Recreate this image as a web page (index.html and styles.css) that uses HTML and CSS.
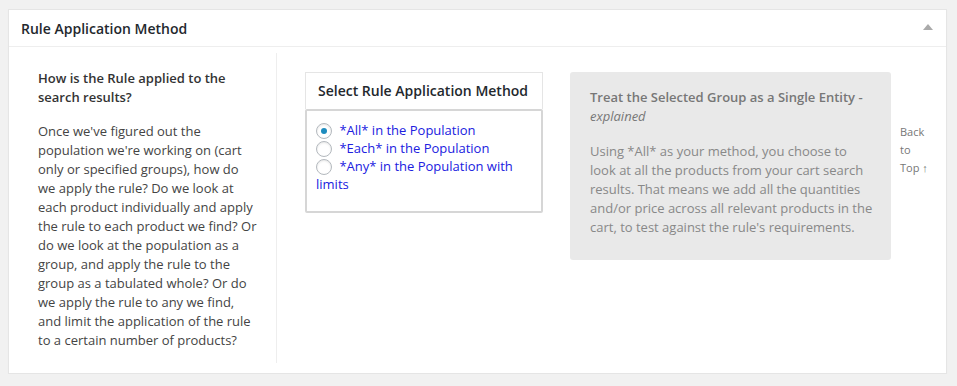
FILE: index.html
```html
<!DOCTYPE html>
<html lang="en">
<head>
    <meta charset="UTF-8">
    <title>Rule Application Method</title>
    <link rel="stylesheet" href="styles.css">
</head>
<body>
    <div class="postbox">
        <div class="hndle">
            <span>Rule Application Method</span>
            <span class="toggle-arrow"></span>
        </div>
        <div class="inside">
            <div class="help-col">
                <p class="help-title">How is the Rule applied to the search results?</p>
                <p>Once we've figured out the population we're working on (cart only or specified groups), how do we apply the rule? Do we look at each product individually and apply the rule to each product we find? Or do we look at the population as a group, and apply the rule to the group as a tabulated whole? Or do we apply the rule to any we find, and limit the application of the rule to a certain number of products?</p>
            </div>
            <div class="select-box">
                <div class="select-head">Select Rule Application Method</div>
                <div class="select-body">
                    <label class="choice"><input type="radio" name="method" checked> *All* in the Population</label><br>
                    <label class="choice"><input type="radio" name="method"> *Each* in the Population</label><br>
                    <label class="choice"><input type="radio" name="method"> *Any* in the Population with limits</label>
                </div>
            </div>
            <div class="explain-box">
                <p class="explain-title">Treat the Selected Group as a Single Entity - <em>explained</em></p>
                <p>Using *All* as your method, you choose to look at all the products from your cart search results. That means we add all the quantities and/or price across all relevant products in the cart, to test against the rule's requirements.</p>
            </div>
            <a class="back-top" href="#">Back to Top &#8593;</a>
        </div>
    </div>
</body>
</html>
```

FILE: styles.css
```css
body {
    margin: 0;
    background-color: #f1f1f1;
    font-family: "Open Sans", "Liberation Sans", sans-serif;
    font-size: 13px;
    color: #444;
}
.postbox {
    margin: 9px 10px 0 8px;
    background: #fff;
    border: 1px solid #e5e5e5;
    box-shadow: 0 1px 1px rgba(0, 0, 0, 0.04);
}
.hndle {
    display: flex;
    align-items: center;
    justify-content: space-between;
    height: 36px;
    padding: 0 13px 0 12px;
    border-bottom: 1px solid #eee;
    font-size: 14px;
    font-weight: 600;
    color: #23282d;
}
.toggle-arrow {
    width: 0;
    height: 0;
    border-left: 5px solid transparent;
    border-right: 5px solid transparent;
    border-bottom: 6px solid #aaa;
    margin-top: -2px;
}
.inside {
    display: flex;
    align-items: flex-start;
    padding: 6px 0 10px;
}
.inside p {
    margin: 0;
    line-height: 19px;
}
.help-col {
    width: 220px;
    padding: 16px 18px 13px 29px;
    border-right: 1px solid #eee;
}
.help-col .help-title {
    font-weight: 600;
    color: #333;
    margin-bottom: 15px;
}
.select-box {
    width: 238px;
    margin: 19px 0 0 28px;
}
.select-head {
    height: 36px;
    line-height: 36px;
    padding-left: 12px;
    border: 1px solid #e5e5e5;
    border-bottom: none;
    font-size: 14px;
    font-weight: 600;
    color: #23282d;
}
.select-body {
    height: 80px;
    padding: 10px 9px 10px;
    border: 2px solid #d6d6d6;
    border-radius: 2px;
    line-height: 18px;
    color: #2020e0;
}
.choice input {
    appearance: none;
    -webkit-appearance: none;
    width: 16px;
    height: 16px;
    margin: 0 4px 0 0;
    border: 1px solid #b4b9be;
    border-radius: 50%;
    background: #fff;
    box-shadow: inset 0 1px 2px rgba(0, 0, 0, 0.1);
    vertical-align: -4px;
    position: relative;
}
.choice input:checked::before {
    content: "";
    position: absolute;
    left: 4px;
    top: 4px;
    width: 6px;
    height: 6px;
    border-radius: 50%;
    background: #1e8cbe;
}
.explain-box {
    width: 283px;
    margin: 19px 0 0 27px;
    padding: 16px 18px 23px 20px;
    background: #e9e9e9;
    border-radius: 3px;
    color: #888;
}
.explain-box .explain-title {
    font-weight: 600;
    color: #777;
    margin-bottom: 16px;
}
.explain-box .explain-title em {
    font-weight: normal;
}
.back-top {
    width: 30px;
    margin: 70px 0 0 9px;
    font-size: 11px;
    line-height: 18px;
    color: #777;
    text-decoration: none;
}
```
